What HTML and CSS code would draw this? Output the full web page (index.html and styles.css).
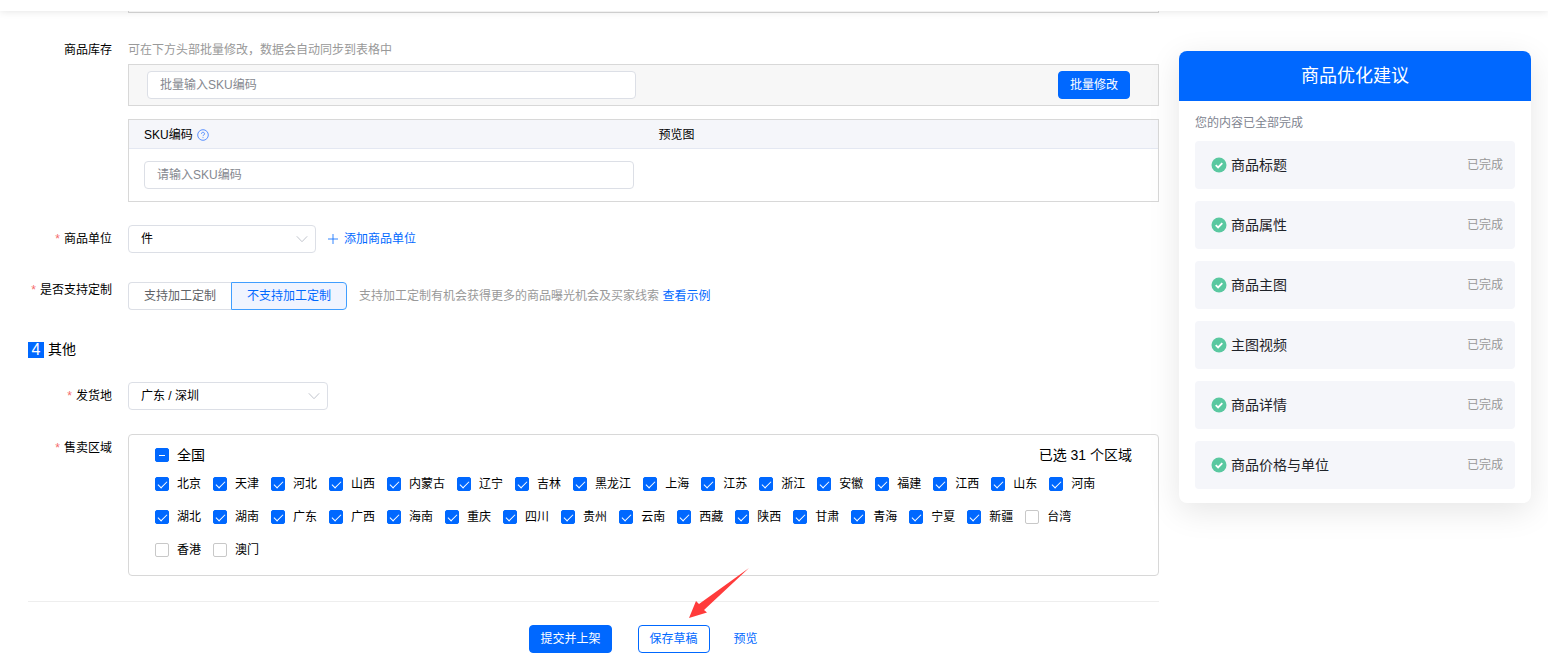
FILE: index.html
```html
<!DOCTYPE html>
<html lang="zh-CN">
<head>
<meta charset="utf-8">
<meta name="viewport" content="width=device-width, initial-scale=1">
<title>商品发布</title>
<link rel="stylesheet" href="styles.css">
</head>
<body>
<header class="topbar"></header>
<div class="page">
  <form class="form">
    <div class="table-tail"></div>

    <div class="row row-stock">
      <div class="label label-short">商品库存</div>
      <div class="field">
        <p class="hint">可在下方头部批量修改，数据会自动同步到表格中</p>
        <div class="batch">
          <input class="input batch-input" type="text" placeholder="批量输入SKU编码" aria-label="批量输入SKU编码">
          <button class="btn btn-primary" type="button">批量修改</button>
        </div>
        <table class="sku-table">
          <thead>
            <tr>
              <th><span class="th-text">SKU编码
                <svg class="help" viewBox="0 0 12 12" aria-hidden="true"><circle cx="6" cy="6" r="5.3"/><path d="M4.5 4.8a1.5 1.5 0 1 1 2.3 1.2c-.5.3-.8.5-.8 1.1M6 8.2v.9"/></svg></span></th>
              <th>预览图</th>
            </tr>
          </thead>
          <tbody>
            <tr>
              <td><input class="input" type="text" placeholder="请输入SKU编码" aria-label="SKU编码"></td>
              <td></td>
            </tr>
          </tbody>
        </table>
      </div>
    </div>

    <div class="row row-unit">
      <label class="label required" for="unit">商品单位</label>
      <div class="field inline">
        <div class="select unit-select">
          <select id="unit"><option>件</option></select>
          <svg class="chevron" viewBox="0 0 12 12" aria-hidden="true"><path d="M.8 3.3 6 8.7l5.2-5.4"/></svg>
        </div>
        <button class="add-link" type="button">
          <svg class="plus" viewBox="0 0 10 10" aria-hidden="true"><path d="M5 0v10M0 5h10"/></svg>
          添加商品单位
        </button>
      </div>
    </div>

    <div class="row row-custom">
      <div class="label label-short required" id="custom-label">是否支持定制</div>
      <div class="field inline">
        <div class="segment" role="radiogroup" aria-labelledby="custom-label">
          <label><input type="radio" name="custom"><span>支持加工定制</span></label>
          <label><input type="radio" name="custom" checked><span>不支持加工定制</span></label>
        </div>
        <p class="note">支持加工定制有机会获得更多的商品曝光机会及买家线索 <a href="#">查看示例</a></p>
      </div>
    </div>

    <h2 class="section-title"><span class="section-no">4</span>其他</h2>

    <div class="row row-origin">
      <label class="label required" for="origin">发货地</label>
      <div class="field inline">
        <div class="select origin-select">
          <select id="origin"><option>广东 / 深圳</option></select>
          <svg class="chevron" viewBox="0 0 12 12" aria-hidden="true"><path d="M.8 3.3 6 8.7l5.2-5.4"/></svg>
        </div>
      </div>
    </div>

    <div class="row row-region">
      <div class="label required">售卖区域</div>
      <div class="field regions">
        <div class="regions-head">
          <label class="check check-all"><input class="partial" type="checkbox">全国</label>
          <span>已选 31 个区域</span>
        </div>
        <div class="regions-list">
          <label class="check"><input type="checkbox" checked>北京</label>
          <label class="check"><input type="checkbox" checked>天津</label>
          <label class="check"><input type="checkbox" checked>河北</label>
          <label class="check"><input type="checkbox" checked>山西</label>
          <label class="check"><input type="checkbox" checked>内蒙古</label>
          <label class="check"><input type="checkbox" checked>辽宁</label>
          <label class="check"><input type="checkbox" checked>吉林</label>
          <label class="check"><input type="checkbox" checked>黑龙江</label>
          <label class="check"><input type="checkbox" checked>上海</label>
          <label class="check"><input type="checkbox" checked>江苏</label>
          <label class="check"><input type="checkbox" checked>浙江</label>
          <label class="check"><input type="checkbox" checked>安徽</label>
          <label class="check"><input type="checkbox" checked>福建</label>
          <label class="check"><input type="checkbox" checked>江西</label>
          <label class="check"><input type="checkbox" checked>山东</label>
          <label class="check"><input type="checkbox" checked>河南</label>
          <label class="check"><input type="checkbox" checked>湖北</label>
          <label class="check"><input type="checkbox" checked>湖南</label>
          <label class="check"><input type="checkbox" checked>广东</label>
          <label class="check"><input type="checkbox" checked>广西</label>
          <label class="check"><input type="checkbox" checked>海南</label>
          <label class="check"><input type="checkbox" checked>重庆</label>
          <label class="check"><input type="checkbox" checked>四川</label>
          <label class="check"><input type="checkbox" checked>贵州</label>
          <label class="check"><input type="checkbox" checked>云南</label>
          <label class="check"><input type="checkbox" checked>西藏</label>
          <label class="check"><input type="checkbox" checked>陕西</label>
          <label class="check"><input type="checkbox" checked>甘肃</label>
          <label class="check"><input type="checkbox" checked>青海</label>
          <label class="check"><input type="checkbox" checked>宁夏</label>
          <label class="check"><input type="checkbox" checked>新疆</label>
          <label class="check"><input type="checkbox">台湾</label>
          <label class="check"><input type="checkbox">香港</label>
          <label class="check"><input type="checkbox">澳门</label>
        </div>
      </div>
    </div>

    <footer class="actions">
      <button class="btn btn-primary" type="submit">提交并上架</button>
      <div class="draft">
        <button class="btn btn-outline" type="button">保存草稿</button>
        <svg class="pointer" viewBox="0 0 60 50" aria-hidden="true"><path d="M0 50 7 33l3 3L60 0 15 42l3 2.500z"/></svg>
      </div>
      <button class="btn-text" type="button">预览</button>
    </footer>
  </form>

  <aside class="tips">
    <h2 class="tips-title">商品优化建议</h2>
    <div class="tips-body">
      <p class="tips-summary">您的内容已全部完成</p>
      <ul class="tips-list">
        <li><svg class="done" viewBox="0 0 16 16" aria-hidden="true"><circle cx="8" cy="8" r="7.500"/><path d="m4.700 8.200 2.400 2.200 4.200-4.200"/></svg><span class="tip-name">商品标题</span><span class="tip-state">已完成</span></li>
        <li><svg class="done" viewBox="0 0 16 16" aria-hidden="true"><circle cx="8" cy="8" r="7.500"/><path d="m4.700 8.200 2.400 2.200 4.200-4.200"/></svg><span class="tip-name">商品属性</span><span class="tip-state">已完成</span></li>
        <li><svg class="done" viewBox="0 0 16 16" aria-hidden="true"><circle cx="8" cy="8" r="7.500"/><path d="m4.700 8.200 2.400 2.200 4.200-4.200"/></svg><span class="tip-name">商品主图</span><span class="tip-state">已完成</span></li>
        <li><svg class="done" viewBox="0 0 16 16" aria-hidden="true"><circle cx="8" cy="8" r="7.500"/><path d="m4.700 8.200 2.400 2.200 4.200-4.200"/></svg><span class="tip-name">主图视频</span><span class="tip-state">已完成</span></li>
        <li><svg class="done" viewBox="0 0 16 16" aria-hidden="true"><circle cx="8" cy="8" r="7.500"/><path d="m4.700 8.200 2.400 2.200 4.200-4.200"/></svg><span class="tip-name">商品详情</span><span class="tip-state">已完成</span></li>
        <li><svg class="done" viewBox="0 0 16 16" aria-hidden="true"><circle cx="8" cy="8" r="7.500"/><path d="m4.700 8.200 2.400 2.200 4.200-4.200"/></svg><span class="tip-name">商品价格与单位</span><span class="tip-state">已完成</span></li>
      </ul>
    </div>
  </aside>
</div>
</body>
</html>
```
FILE: styles.css
```css
* {
  box-sizing: border-box;
}

body {
  margin: 0;
  background: #fff;
  color: #000;
  font: 12px/16px "Liberation Sans", "Noto Sans CJK SC", sans-serif;
}

h2,
p,
ul {
  margin: 0;
  padding: 0;
  font-weight: 400;
  list-style: none;
}

button,
input,
select {
  font: inherit;
}

a {
  color: #0068ff;
  text-decoration: none;
}

.topbar {
  position: relative;
  height: 11px;
  background: #fff;
  box-shadow: 0 0 8px rgba(0, 0, 0, 0.12);
}

.page {
  display: flex;
  align-items: flex-start;
  gap: 20px;
  padding: 0 17px 0 28px;
}

.form {
  flex: 1;
  min-width: 0;
}

.table-tail {
  height: 2px;
  margin-left: 100px;
  border: 1px solid #d8d8d8;
  border-top: 0;
}

/* Form rows */
.row {
  display: grid;
  grid-template-columns: 84px minmax(0, 1fr);
  gap: 16px;
  align-items: start;
}

.row-stock {
  padding-top: 29px;
}

.row-unit {
  padding-top: 23px;
}

.row-custom {
  padding-top: 29px;
}

.row-origin {
  padding-top: 24px;
}

.row-region {
  padding-top: 24px;
}

.label {
  line-height: 28px;
  text-align: right;
  white-space: nowrap;
}

.label-short {
  line-height: 16px;
}

.required::before {
  content: "*";
  margin-right: 4px;
  color: #f56c6c;
}

.inline {
  display: flex;
  align-items: center;
  gap: 12px;
}

.hint,
.note {
  color: #999;
}

.hint {
  margin-bottom: 6px;
}

.input {
  display: block;
  width: 100%;
  height: 28px;
  padding: 0 12px;
  border: 1px solid #dcdfe6;
  border-radius: 4px;
  background: #fff;
  color: #000;
}

.input::placeholder {
  color: #85888f;
}

.batch {
  display: flex;
  align-items: center;
  justify-content: space-between;
  height: 42px;
  margin-bottom: 13px;
  padding: 0 28px 0 18px;
  border: 1px solid #d8d8d8;
  background: #f7f7f7;
}

.batch-input {
  width: calc(50% - 3px);
}

/* Buttons */
.btn {
  min-width: 72px;
  height: 28px;
  padding: 0 10px;
  border: 1px solid #0068ff;
  border-radius: 4px;
  line-height: 26px;
}

.btn-primary {
  background: #0068ff;
  color: #fff;
}

.btn-outline {
  background: #fff;
  color: #0068ff;
}

.btn-text,
.add-link {
  padding: 0;
  border: 0;
  background: none;
  color: #0068ff;
}

.add-link {
  display: flex;
  align-items: center;
  gap: 6px;
}

.plus {
  width: 10px;
  height: 10px;
  stroke: #0068ff;
  stroke-width: 0.8;
}

/* SKU table */
.sku-table {
  width: 100%;
  table-layout: fixed;
  border: 1px solid #d8d8d8;
  border-spacing: 0;
}

.sku-table th {
  height: 29px;
  padding: 2px 10px 0 15px;
  border-bottom: 1px solid #e4e8f2;
  background: #f5f6fa;
  font-weight: 400;
  text-align: left;
}

.sku-table td {
  padding: 12px 10px 12px 15px;
}

.th-text {
  display: flex;
  align-items: center;
  gap: 4px;
}

.help {
  width: 12px;
  height: 12px;
  fill: none;
  stroke: #4a86ff;
  stroke-width: 0.9;
}

/* Select boxes */
.select {
  position: relative;
}

.unit-select {
  width: 188px;
}

.origin-select {
  width: 200px;
}

.select select {
  display: block;
  width: 100%;
  height: 28px;
  padding: 0 30px 0 12px;
  border: 1px solid #dcdfe6;
  border-radius: 4px;
  background: #fff;
  color: #000;
  appearance: none;
}

.chevron {
  position: absolute;
  top: 8px;
  right: 8px;
  width: 12px;
  height: 12px;
  fill: none;
  stroke: #c0c4cc;
  pointer-events: none;
}

/* Segmented radios */
.segment {
  display: flex;
}

.segment input {
  position: absolute;
  opacity: 0;
}

.segment span {
  display: block;
  height: 28px;
  padding: 0 15px;
  border: 1px solid #dcdfe6;
  color: #606266;
  line-height: 26px;
}

.segment label:first-child span {
  border-right: 0;
  border-radius: 4px 0 0 4px;
}

.segment label:last-child span {
  border-radius: 0 4px 4px 0;
}

.segment input:checked + span {
  border-color: #409eff;
  background: #f0f4ff;
  color: #0068ff;
}

.section-title {
  display: flex;
  align-items: center;
  gap: 4px;
  padding-top: 31px;
  font-size: 14px;
  line-height: 17px;
}

.section-no {
  width: 16px;
  height: 16px;
  background: #0068ff;
  color: #fff;
  font-size: 16px;
  line-height: 16px;
  text-align: center;
}

/* Sales regions */
.regions {
  padding: 10px 26px 9px;
  border: 1px solid #d8d8d8;
  border-radius: 4px;
}

.regions-head {
  display: flex;
  justify-content: space-between;
  margin-bottom: 3px;
  font-size: 14px;
  line-height: 20px;
}

.regions-list {
  display: flex;
  flex-wrap: wrap;
  row-gap: 1px;
}

.check {
  display: flex;
  align-items: center;
  gap: 8px;
  margin-right: 12px;
  line-height: 32px;
}

.check-all {
  line-height: 20px;
}

.check input {
  position: relative;
  width: 14px;
  height: 14px;
  margin: 0;
  border: 1px solid #c8c8c8;
  border-radius: 2px;
  background: #fff;
  appearance: none;
}

.check input:checked,
.check input.partial {
  border-color: #0068ff;
  background: #0068ff;
}

.check input:checked::after {
  content: "";
  position: absolute;
  top: 1px;
  left: 4px;
  width: 4px;
  height: 8px;
  border: solid #fff;
  border-width: 0 1px 1px 0;
  transform: rotate(45deg);
}

.check input.partial::after {
  content: "";
  position: absolute;
  top: 6px;
  left: 3px;
  width: 6px;
  height: 1px;
  background: #fff;
}

/* Bottom actions */
.actions {
  display: flex;
  align-items: center;
  justify-content: center;
  margin-top: 25px;
  padding: 23px 0 14px 100px;
  border-top: 1px solid #eee;
}

.draft {
  position: relative;
  margin: 0 24px 0 26px;
}

.pointer {
  position: absolute;
  top: -57px;
  left: 51px;
  width: 60px;
  height: 50px;
  fill: #ff3b3b;
  pointer-events: none;
}

/* Suggestions panel */
.tips {
  width: 352px;
  margin-top: 40px;
  border-radius: 8px;
  background: #fff;
  box-shadow: 0 8px 32px rgba(0, 0, 0, 0.1);
}

.tips-title {
  border-radius: 8px 8px 0 0;
  background: #0068ff;
  color: #fff;
  font-size: 18px;
  line-height: 50px;
  text-align: center;
}

.tips-body {
  padding: 12px 16px 14px;
}

.tips-summary {
  margin-bottom: 8px;
  color: #808490;
  line-height: 20px;
}

.tips-list {
  display: grid;
  gap: 12px;
}

.tips-list li {
  display: flex;
  align-items: center;
  gap: 4px;
  height: 48px;
  padding: 0 12px 0 16px;
  border-radius: 4px;
  background: #f5f6fa;
}

.done {
  width: 16px;
  height: 16px;
  fill: #5ac8a0;
}

.done path {
  fill: none;
  stroke: #fff;
  stroke-width: 1.8;
}

.tip-name {
  flex: 1;
  color: #1f2329;
  font-size: 14px;
}

.tip-state {
  color: #999;
}
```
